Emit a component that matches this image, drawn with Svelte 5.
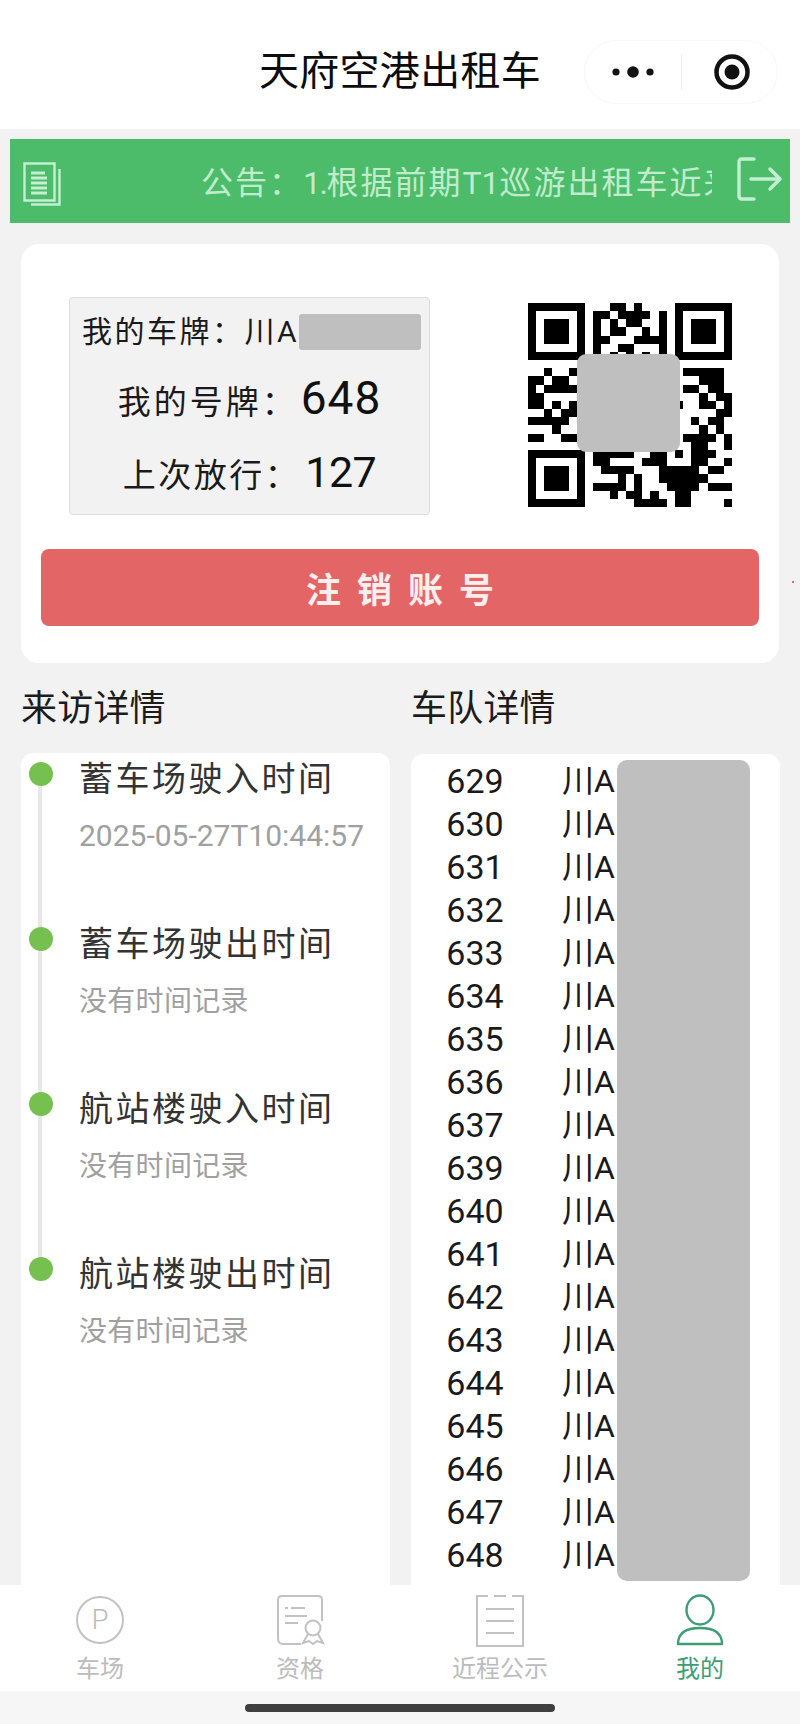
<script>
  const qrRows = [
    '0-6 10-11 13 18-24',
    '0 6 8-9 11-14 16 18 24',
    '0 2-4 6 8 10 12-13 16 18 20-22 24',
    '0 2-4 6 8 10-11 14 16 18 20-22 24',
    '0 2-4 6 8-9 13-16 18 20-22 24',
    '0 6 8 11-12 16 18 24',
    '0-6 8 10 12 14 16 18-24',
    '',
    '2 5 19-23',
    '0-1 3-4 21-23',
    '0 2-5 19-20 22-23',
    '0-1 21 23-24',
    '0-1 3 5 18 21-22 24',
    '2 4-5 23-24',
    '0-4 20 22-23',
    '3 21 23',
    '0-1 4-5 19-22 24',
    '20-21 24',
    '0-6 8-12 15-16 18 20-22',
    '0 6 8-9 14-16 20-21 24',
    '0 2-4 6 9-12 16-20 22-23',
    '0 2-4 6 11 13 16-21',
    '0 2-4 6 8-11 13 17-20 22-24',
    '0 6 10 12-13 15 18-19',
    '0-6 13-16 18-19 24'
  ];
  const cells = qrRows.flatMap((row, y) =>
    row.split(' ').filter(Boolean).map((run) => {
      const [a, b] = run.split('-').map(Number);
      return { x: a, y, w: (b ?? a) - a + 1 };
    })
  );
  const visits = [
    { title: '蓄车场驶入时间', time: '2025-05-27T10:44:57', stamp: true },
    { title: '蓄车场驶出时间', time: '没有时间记录', stamp: false },
    { title: '航站楼驶入时间', time: '没有时间记录', stamp: false },
    { title: '航站楼驶出时间', time: '没有时间记录', stamp: false }
  ];
  const fleet = [629, 630, 631, 632, 633, 634, 635, 636, 637, 639, 640, 641, 642, 643, 644, 645, 646, 647, 648];
</script>

<div class="page">
  <header class="top">
    <h1>天府空港出租车</h1>
    <div class="capsule">
      <svg class="more" viewBox="0 0 46 16" width="46" height="16">
        <circle cx="6" cy="8" r="3.6" />
        <circle cx="23" cy="8" r="5.8" />
        <circle cx="40" cy="8" r="3.6" />
      </svg>
      <span class="divider"></span>
      <svg class="target" viewBox="0 0 38 38" width="38" height="38">
        <circle cx="19" cy="19" r="15.5" fill="none" stroke="#111" stroke-width="4.5" />
        <circle cx="19" cy="19" r="7.5" fill="#111" />
      </svg>
    </div>
  </header>

  <section class="notice">
    <svg class="doc" viewBox="0 0 40 44" width="40" height="44" fill="none" stroke="#c4f0d2" stroke-width="2">
      <path d="M1.5 1.5h30v37h-30z" stroke-width="2.4" />
      <path d="M8 11h14M8 16h16M8 21h16M8 26h16M8 31h16" stroke-width="2.8" />
      <path d="M36.5 7v35.5H8" stroke-width="2.4" />
    </svg>
    <div class="marquee"><span>公告：</span><span class="latin tight">1.</span><span>根据前期</span><span class="latin">T1</span><span>巡游出租车近来</span></div>
    <svg class="exit" viewBox="0 0 46 44" width="46" height="44" fill="none" stroke="#c4f0d2" stroke-width="3.4" stroke-linecap="round" stroke-linejoin="round">
      <path d="M17 2H5Q2 2 2 5v34q0 3 3 3h12" />
      <path d="M14 22h29M33 12l10 10-10 10" />
    </svg>
  </section>

  <section class="card">
    <div class="info">
      <div class="plate">
        <div class="row first">
          <span>我的车牌：川A</span>
          <span class="mask-plate"></span>
        </div>
        <div class="row">我的号牌：<b>648</b></div>
        <div class="row third">上次放行：<b>127</b></div>
      </div>
      <div class="qr">
        <svg viewBox="0 0 25 25" width="204" height="204" shape-rendering="crispEdges">
          {#each cells as c}
            <rect x={c.x} y={c.y} width={c.w} height="1" />
          {/each}
        </svg>
        <span class="mask-qr"></span>
      </div>
    </div>
    <button class="logout">注销账号</button>
  </section>

  <main class="columns">
    <section class="col">
      <h2>来访详情</h2>
      <div class="panel timeline">
        {#each visits as v, i}
          <div class="step">
            <div class="marker">
              <span class="dot"></span>
              {#if i < visits.length - 1}<span class="line"></span>{/if}
            </div>
            <div class="body">
              <div class="step-title">{v.title}</div>
              <div class="step-time" class:stamp={v.stamp}>{v.time}</div>
            </div>
          </div>
        {/each}
      </div>
    </section>
    <section class="col">
      <h2>车队详情</h2>
      <div class="panel list">
        {#each fleet as n}
          <div class="car"><span class="num">{n}</span><span class="pl">川A</span></div>
        {/each}
        <span class="mask-list"></span>
      </div>
    </section>
  </main>

  <nav class="tabs">
    <div class="tab">
      <svg viewBox="0 0 50 54" width="50" height="54" fill="none" stroke="#c2c2c2" stroke-width="2">
        <circle cx="25" cy="26" r="23" />
        <text x="25" y="35" text-anchor="middle" class="p">P</text>
      </svg>
      <span>车场</span>
    </div>
    <div class="tab">
      <svg viewBox="0 0 50 54" width="50" height="54" fill="none" stroke="#c2c2c2" stroke-width="2">
        <path d="M3 44V6q0-4 4-4h36q4 0 4 4v21M3 44q0 6 5 6h18M47 46v1" />
        <path d="M10 14h3M16 14h14M10 22h22M10 29h13" />
        <circle cx="38" cy="34" r="7.5" />
        <path d="M33 40l-5 9 6-2 4 3 4-3 6 2-5-9" />
      </svg>
      <span>资格</span>
    </div>
    <div class="tab">
      <svg viewBox="0 0 50 54" width="50" height="54" fill="none" stroke="#c2c2c2" stroke-width="2">
        <path d="M13 2H2v50h46V2H37M19 2h12" />
        <path d="M11 15h28M11 27h28M11 39h28" />
      </svg>
      <span>近程公示</span>
    </div>
    <div class="tab active">
      <svg viewBox="0 0 50 54" width="50" height="54" fill="none" stroke="#3f9c74" stroke-width="2.4">
        <ellipse cx="25" cy="16" rx="13.5" ry="14.5" />
        <path d="M3 50q0-16 22-16t22 16z" stroke-linejoin="round" />
      </svg>
      <span>我的</span>
    </div>
  </nav>
  <div class="home"><span></span></div>
  <i class="speck"></i>
</div>

<style>
  :global(body) {
    margin: 0;
    background: #f2f2f2;
  }
  .page {
    position: relative;
    width: 800px;
    height: 1724px;
    display: flex;
    flex-direction: column;
    overflow: hidden;
    background: #f2f2f2;
    font-family: Roboto, "Noto Sans CJK SC", sans-serif;
    color: #111;
  }
  .top {
    height: 129px;
    box-sizing: border-box;
    padding: 40px 22px 0;
    background: #fff;
    display: grid;
    grid-template-columns: 1fr auto 1fr;
    align-items: start;
  }
  h1 {
    grid-column: 2;
    margin: 0;
    font-size: 40px;
    font-weight: 400;
    line-height: 64px;
    letter-spacing: 0.3px;
    color: #0c0c0c;
  }
  .capsule {
    grid-column: 3;
    justify-self: end;
    width: 194px;
    height: 64px;
    box-sizing: border-box;
    border: 1px solid #f8f8f8;
    border-radius: 32px;
    display: flex;
    align-items: center;
    padding-left: 25px;
  }
  .more {
    fill: #111;
  }
  .divider {
    width: 1px;
    height: 36px;
    background: #ececec;
    margin: 0 31px 0 25px;
  }
  .notice {
    margin: 10px 10px 0;
    height: 84px;
    background: #4cbb6a;
    display: flex;
    align-items: center;
    padding-left: 13px;
  }
  .doc {
    flex: none;
    margin-top: 6px;
  }
  .marquee {
    flex: none;
    width: 511px;
    margin-left: 138px;
    margin-top: -3px;
    overflow: hidden;
    white-space: nowrap;
    font-size: 32px;
    letter-spacing: 2px;
    color: #c0eccd;
  }
  .latin {
    letter-spacing: 0;
  }
  .latin.tight {
    letter-spacing: -1.5px;
  }
  .exit {
    flex: none;
    margin-left: 25px;
    margin-top: -4px;
  }
  .card {
    margin: 21px 21px 0;
    height: 419px;
    box-sizing: border-box;
    padding: 53px 20px 0;
    background: #fff;
    border-radius: 18px;
  }
  .info {
    display: flex;
    align-items: flex-start;
    padding-left: 28px;
  }
  .plate {
    width: 361px;
    height: 218px;
    box-sizing: border-box;
    background: #f2f2f2;
    border: 1px solid #dcdcdc;
    border-radius: 4px;
    padding-top: 16px;
    text-align: center;
    font-size: 33px;
    letter-spacing: 3px;
    color: #1a1a1a;
  }
  .row {
    height: 50px;
    line-height: 50px;
    margin-top: 23px;
  }
  .row b {
    font-weight: 400;
    font-size: 46px;
    letter-spacing: 1px;
    margin-left: 3px;
    color: #111;
  }
  .row.third {
    margin-top: 24px;
    letter-spacing: 2.5px;
  }
  .row.third b {
    font-size: 43px;
    letter-spacing: -0.5px;
    margin-left: 5px;
  }
  .row.first {
    margin-top: 0;
    height: 36px;
    line-height: 36px;
    display: flex;
    align-items: center;
    padding-left: 12px;
    font-size: 30px;
    letter-spacing: 2.5px;
  }
  .mask-plate {
    width: 122px;
    height: 36px;
    background: #bfbfbf;
    border-radius: 3px;
    margin-left: 0;
  }
  .qr {
    position: relative;
    width: 204px;
    height: 204px;
    margin: 6px 0 0 98px;
    line-height: 0;
  }
  .mask-qr {
    position: absolute;
    left: 49px;
    top: 51px;
    width: 103px;
    height: 98px;
    border-radius: 9px;
    background: #bfbfbf;
  }
  .logout {
    display: block;
    width: 718px;
    height: 77px;
    margin-top: 34px;
    border: 0;
    border-radius: 8px;
    background: #e46565;
    color: #fdeeee;
    font-family: inherit;
    font-size: 35px;
    font-weight: 700;
    letter-spacing: 16px;
    padding: 0 0 0 16px;
  }
  .columns {
    flex: 1;
    min-height: 0;
    display: flex;
    gap: 21px;
    padding: 0 20px 0 21px;
    overflow: hidden;
  }
  .col {
    flex: 1 1 0;
    min-width: 0;
    display: flex;
    flex-direction: column;
  }
  h2 {
    margin: 25px 0 0;
    height: 42px;
    line-height: 42px;
    font-size: 36px;
    font-weight: 400;
    color: #1c1c1c;
    letter-spacing: 0.2px;
  }
  .panel {
    position: relative;
    flex: 1;
    margin-top: 23px;
    background: #fff;
    border-radius: 12px 12px 0 0;
    box-sizing: border-box;
  }
  .timeline {
    padding: 9px 0 0 8px;
  }
  .step {
    display: flex;
    height: 165px;
  }
  .marker {
    width: 24px;
    display: flex;
    flex-direction: column;
    align-items: center;
  }
  .dot {
    width: 24px;
    height: 24px;
    flex: none;
    border-radius: 50%;
    background: #76c04f;
  }
  .line {
    flex: 1;
    width: 4px;
    background: #e7e7e7;
    margin-right: 2px;
  }
  .body {
    margin-left: 26px;
  }
  .step-title {
    font-size: 34px;
    line-height: 34px;
    letter-spacing: 2.5px;
    color: #333;
  }
  .step-time {
    margin-top: 24px;
    font-size: 28px;
    line-height: 34px;
    letter-spacing: 0.3px;
    color: #a0a0a0;
    white-space: nowrap;
  }
  .step-time.stamp {
    margin-top: 23px;
    font-size: 30px;
    letter-spacing: 0;
  }
  .list {
    margin-top: 24px;
    padding-top: 6px;
  }
  .car {
    display: flex;
    height: 43px;
    line-height: 43px;
    font-size: 34px;
    color: #1a1a1a;
  }
  .num {
    width: 112px;
    margin-left: 8px;
    text-align: center;
  }
  .pl {
    margin-left: 31px;
    font-size: 32px;
  }
  .mask-list {
    position: absolute;
    left: 206px;
    top: 6px;
    bottom: 4px;
    width: 133px;
    border-radius: 10px;
    background: #bfbfbf;
  }
  .tabs {
    height: 106px;
    background: #fff;
    display: flex;
    flex: none;
  }
  .tab {
    flex: 1;
    display: flex;
    flex-direction: column;
    align-items: center;
    padding-top: 9px;
    font-size: 24px;
    color: #bcbcbc;
  }
  .tab svg {
    display: block;
  }
  .tab span {
    margin-top: 6px;
    line-height: 30px;
  }
  .tab.active {
    color: #3f9c74;
  }
  .p {
    font-family: Roboto, sans-serif;
    font-size: 27px;
    font-weight: 300;
    fill: #b8b8b8;
    stroke: none;
  }
  .home {
    flex: none;
    height: 33px;
    background: #f6f6f6;
    display: flex;
    justify-content: center;
  }
  .home span {
    width: 310px;
    height: 8px;
    margin-top: 13px;
    border-radius: 4px;
    background: #3f3f3f;
  }
  .speck {
    position: absolute;
    left: 792px;
    top: 581px;
    width: 2px;
    height: 2px;
    background: #e66;
  }
</style>
